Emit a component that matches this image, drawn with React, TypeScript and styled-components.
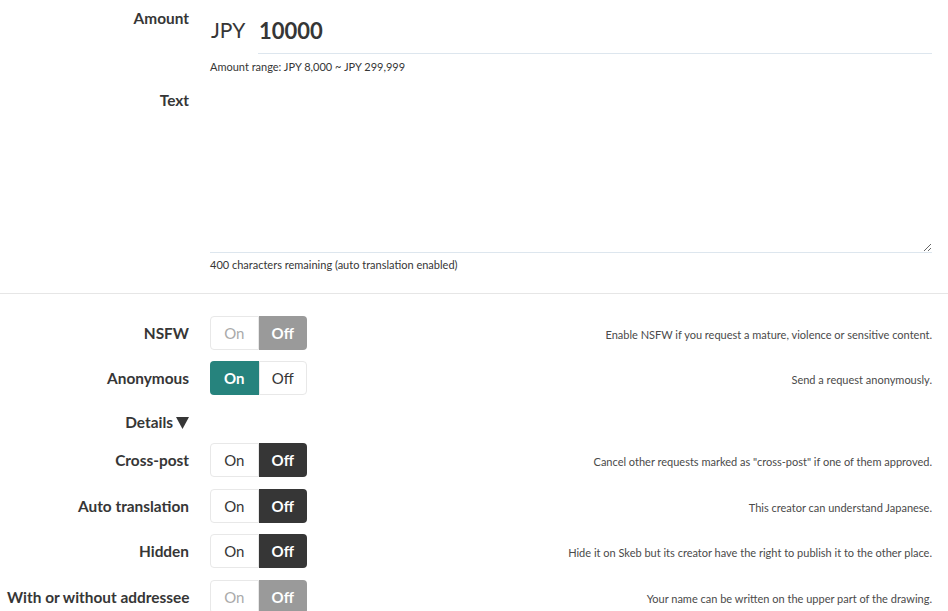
import React from "react";
import styled, { createGlobalStyle } from "styled-components";

const Global = createGlobalStyle`
  html, body { margin: 0; padding: 0; background: #fff; }
  body { font-family: "Lato", "Liberation Sans", sans-serif; color: #363636; }
  * { box-sizing: border-box; }
`;

const Page = styled.div`
  width: 948px;
  display: flex;
  flex-direction: column;
`;

const Section = styled.div<{ $gap?: number; $pt?: number }>`
  display: flex;
  flex-direction: column;
  gap: ${(p) => p.$gap ?? 0}px;
  padding: ${(p) => p.$pt ?? 0}px 16px 0 7px;
`;

const Field = styled.div<{ $mt?: number }>`
  display: grid;
  grid-template-columns: 182px 1fr;
  column-gap: 21px;
  align-items: start;
  margin-top: ${(p) => p.$mt ?? 0}px;
`;

const Label = styled.div<{ $pt?: number }>`
  text-align: right;
  font-weight: 700;
  font-size: 15.4px;
  line-height: 20px;
  color: #363636;
  padding-top: ${(p) => p.$pt ?? 0}px;
  white-space: nowrap;
`;

const AmountBox = styled.div`
  display: flex;
  align-items: center;
  height: 46px;
  margin-top: 8px;
`;

const Currency = styled.span`
  font-size: 21px;
  color: #363636;
  width: 48px;
  padding-left: 1px;
  margin-top: -3px;
`;

const AmountInput = styled.div`
  flex: 1;
  height: 100%;
  display: flex;
  align-items: center;
  font-size: 22px;
  font-weight: 700;
  color: #363636;
  border-bottom: 1px solid #dde6ee;
  padding-left: 1px;
  padding-bottom: 1px;
`;

const Help = styled.div<{ $mt?: number }>`
  font-size: 11px;
  line-height: 14px;
  color: #363636;
  margin-top: ${(p) => p.$mt ?? 0}px;
`;

const TextArea = styled.textarea`
  display: block;
  width: 100%;
  height: 167px;
  margin-top: 6px;
  border: none;
  border-bottom: 1px solid #dde6ee;
  resize: vertical;
  outline: none;
  font-family: inherit;
  font-size: 15px;
  padding: 8px 0;
  background: transparent;
`;

const Divider = styled.hr`
  border: none;
  border-top: 1px solid #e6e6e6;
  margin: 21px 0 0 0;
  width: 100%;
`;

type BtnState = "plain" | "teal" | "dark" | "grey";

const ToggleGroup = styled.div`
  display: flex;
  width: 97px;
  height: 34px;
`;

const ToggleBtn = styled.div<{ $state: BtnState; $first?: boolean; $disabled?: boolean }>`
  flex: 1;
  display: flex;
  align-items: center;
  justify-content: center;
  font-size: 15px;
  border: 1px solid ${(p) => (p.$state === "plain" ? "#e8e8e8" : "transparent")};
  border-radius: ${(p) => (p.$first ? "4px 0 0 4px" : "0 4px 4px 0")};
  background: ${(p) =>
    p.$state === "teal" ? "#26837d" : p.$state === "dark" ? "#363636" : p.$state === "grey" ? "#9a9a9a" : "#fff"};
  color: ${(p) => (p.$state !== "plain" ? "#fff" : p.$disabled ? "#aaaaaa" : "#363636")};
  font-weight: ${(p) => (p.$state !== "plain" ? 700 : 400)};
`;

const OptionRow = styled.div`
  display: grid;
  grid-template-columns: 182px 97px 1fr;
  column-gap: 21px;
  align-items: center;
  height: 34px;
`;

const Desc = styled.div`
  text-align: right;
  font-size: 11px;
  color: #4a4a4a;
  padding-top: 3px;
  white-space: nowrap;
`;

const DetailsLabel = styled.div`
  display: flex;
  justify-content: flex-end;
  align-items: center;
  gap: 3px;
  font-weight: 700;
  font-size: 15.4px;
  width: 182px;
  line-height: 20px;
  margin: 17px 0 0;
`;

const Caret = styled.svg`
  width: 13px;
  height: 12px;
  fill: #363636;
  margin-top: 1px;
`;

type Opt = { label: string; on: boolean; desc: string; disabled?: boolean };

const Toggle: React.FC<{ on: boolean; disabled?: boolean }> = ({ on, disabled }) => (
  <ToggleGroup>
    <ToggleBtn $first $state={on ? "teal" : "plain"} $disabled={disabled}>On</ToggleBtn>
    <ToggleBtn $state={on ? "plain" : disabled ? "grey" : "dark"} $disabled={disabled}>Off</ToggleBtn>
  </ToggleGroup>
);

const Option: React.FC<{ o: Opt }> = ({ o }) => (
  <OptionRow>
    <Label>{o.label}</Label>
    <Toggle on={o.on} disabled={o.disabled} />
    <Desc>{o.desc}</Desc>
  </OptionRow>
);

const top: Opt[] = [
  { label: "NSFW", on: false, disabled: true, desc: "Enable NSFW if you request a mature, violence or sensitive content." },
  { label: "Anonymous", on: true, desc: "Send a request anonymously." },
];

const details: Opt[] = [
  { label: "Cross-post", on: false, desc: 'Cancel other requests marked as "cross-post" if one of them approved.' },
  { label: "Auto translation", on: false, desc: "This creator can understand Japanese." },
  { label: "Hidden", on: false, desc: "Hide it on Skeb but its creator have the right to publish it to the other place." },
  { label: "With or without addressee", on: false, disabled: true, desc: "Your name can be written on the upper part of the drawing." },
];

export default function App() {
  return (
    <Page>
      <Global />
      <Section>
        <Field>
          <Label $pt={8}>Amount</Label>
          <div>
            <AmountBox>
              <Currency>JPY</Currency>
              <AmountInput>10000</AmountInput>
            </AmountBox>
            <Help $mt={6}>Amount range: JPY 8,000 ~ JPY 299,999</Help>
          </div>
        </Field>
        <Field $mt={6}>
          <Label $pt={10}>Text</Label>
          <div>
            <TextArea defaultValue="" />
            <Help $mt={5}>400 characters remaining (auto translation enabled)</Help>
          </div>
        </Field>
      </Section>
      <Divider />
      <Section $gap={11} $pt={22}>
        {top.map((o) => (
          <Option key={o.label} o={o} />
        ))}
      </Section>
      <Section>
        <DetailsLabel>
          <span>Details</span>
          <Caret viewBox="0 0 13 12">
            <path d="M0 0 H13 L6.5 12 Z" />
          </Caret>
        </DetailsLabel>
      </Section>
      <Section $gap={11.7} $pt={11}>
        {details.map((o) => (
          <Option key={o.label} o={o} />
        ))}
      </Section>
    </Page>
  );
}
